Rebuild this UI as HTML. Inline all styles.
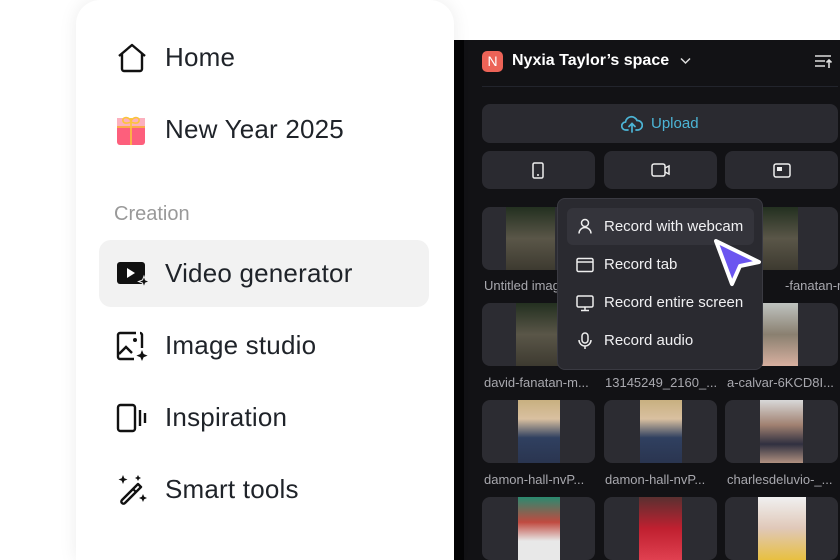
<!DOCTYPE html>
<html><head><meta charset="utf-8"><style>
*{margin:0;padding:0;box-sizing:border-box}
html,body{width:840px;height:560px;overflow:hidden}
body{background:#fff;position:relative;font-family:"Liberation Sans",sans-serif}
.dark{position:absolute;left:454px;top:40px;width:386px;height:520px;background:#121215;border-left:10px solid #050506}
.card{position:absolute;left:76px;top:0;width:378px;height:560px;background:#fff;border-radius:24px 24px 0 0;box-shadow:0 0 18px rgba(0,0,0,.08)}
.nav{position:absolute;left:165px;font-size:26px;color:#1f2329;line-height:28px;letter-spacing:.2px}
.ic{position:absolute;left:116px}
.cre{position:absolute;left:114px;top:203px;font-size:20px;color:#999}
.hl{position:absolute;left:99px;top:240px;width:330px;height:67px;background:#f2f2f2;border-radius:12px}
.t{position:absolute;color:#fff}
.btn{position:absolute;background:#2a2a30;border-radius:8px}
.tile{position:absolute;width:113px;height:63px;background:#2c2c32;border-radius:8px;overflow:hidden}
.tile i{position:absolute;left:24px;top:0;width:49px;height:63px}
.lb{position:absolute;font-size:13px;color:#a8a8ae;white-space:nowrap}
.menu{position:absolute;left:557px;top:198px;width:206px;height:172px;background:#2a2a30;border:1px solid #3a3a42;border-radius:8px}
.mi{position:absolute;left:604px;font-size:15px;color:#f0f0f2}
</style></head><body>
<div class="dark"></div>
<div class="card"></div>
<div class="hl"></div>
<svg class="ic" style="top:42px" width="32" height="32" viewBox="0 0 32 32"><path d="M3 14L16 3l13 11M6 12v15a2 2 0 0 0 2 2h16a2 2 0 0 0 2-2V12" fill="none" stroke="#111" stroke-width="2.4" stroke-linejoin="round"/></svg>
<div class="nav" style="top:43px">Home</div>
<svg class="ic" style="top:114px" width="30" height="32" viewBox="0 0 30 32"><rect x="1" y="4" width="28" height="27" rx="3" fill="#fd5f7c"/><rect x="1" y="4" width="28" height="8" fill="#fcb0be"/><path d="M15 4v27M1 13h28M15 7c-3-5-9-4-8 0s8 1 8 1c0 0 7 3 8-1s-5-5-8 0" fill="none" stroke="#fbc43a" stroke-width="1.6"/></svg>
<div class="nav" style="top:115px">New Year 2025</div>
<div class="cre">Creation</div>
<svg class="ic" style="top:259px" width="34" height="30" viewBox="0 0 34 30"><rect x="1" y="3" width="28" height="22" rx="3" fill="#111"/><path d="M11 9v10l8-5z" fill="#fff"/><path d="M28 17l1.5 4 4 1.5-4 1.5L28 28l-1.5-4-4-1.5 4-1.5z" fill="#111" stroke="#f2f2f2" stroke-width="1"/></svg>
<div class="nav" style="top:259px">Video generator</div>
<svg class="ic" style="top:330px" width="34" height="32" viewBox="0 0 34 32"><path d="M20 3H4a2 2 0 0 0-2 2v22a2 2 0 0 0 2 2h14M26 18V5a2 2 0 0 0-2-2" fill="none" stroke="#111" stroke-width="2.4"/><path d="M3 24l7-7 6 6" fill="none" stroke="#111" stroke-width="2.4"/><circle cx="19" cy="10" r="2" fill="#111"/><path d="M26 20l1.6 4 4 1.6-4 1.6L26 31l-1.6-3.8-4-1.6 4-1.6z" fill="#111"/></svg>
<div class="nav" style="top:331px">Image studio</div>
<svg class="ic" style="top:402px" width="32" height="32" viewBox="0 0 32 32"><rect x="2" y="3" width="17" height="26" rx="2.5" fill="none" stroke="#111" stroke-width="2.4"/><path d="M24 8v16M29 11v10" stroke="#111" stroke-width="2.4"/></svg>
<div class="nav" style="top:403px">Inspiration</div>
<svg class="ic" style="top:474px" width="32" height="32" viewBox="0 0 32 32"><path d="M22 10l3 3L9 29a2 2 0 0 1-3 0 2 2 0 0 1 0-3z" fill="none" stroke="#111" stroke-width="2.4" stroke-linejoin="round"/><path d="M17 15l3 3" stroke="#111" stroke-width="2.2"/><path d="M7 1l1.3 3.2 3.2 1.3-3.2 1.3L7 10 5.7 6.8 2.5 5.5l3.2-1.3zM27 20l1.2 2.8 2.8 1.2-2.8 1.2L27 28l-1.2-2.8-2.8-1.2 2.8-1.2zM22 1l1 2 2 1-2 1-1 2-1-2-2-1 2-1z" fill="#111"/></svg>
<div class="nav" style="top:475px">Smart tools</div>

<div style="position:absolute;left:482px;top:51px;width:21px;height:21px;border-radius:5px;background:#ec6357;color:#fff;font-size:14px;text-align:center;line-height:21px">N</div>
<div class="t" style="left:512px;top:52px;font-size:16px;font-weight:bold">Nyxia Taylor’s space</div>
<svg style="position:absolute;left:680px;top:57px" width="11" height="8" viewBox="0 0 11 8"><path d="M1 1.5l4.5 4.5 4.5-4.5" fill="none" stroke="#ddd" stroke-width="1.5"/></svg>
<svg style="position:absolute;left:815px;top:54px" width="18" height="16" viewBox="0 0 18 16"><path d="M0 2h16M0 7h10M0 12h10M14 14V6M11.5 8.5L14 6l2.5 2.5" fill="none" stroke="#ddd" stroke-width="1.6"/></svg>
<div style="position:absolute;left:482px;top:86px;width:356px;height:1px;background:#22242c"></div>
<div class="btn" style="left:482px;top:104px;width:356px;height:39px"></div>
<svg style="position:absolute;left:621px;top:114px" width="22" height="19" viewBox="0 0 22 19"><path d="M7 16H5a4 4 0 0 1-.5-8A6 6 0 0 1 16 6.5 4.5 4.5 0 0 1 17 16h-2M11 18v-8M8 12.5l3-3 3 3" fill="none" stroke="#4cb5d6" stroke-width="1.7" stroke-linecap="round"/></svg>
<div class="t" style="left:651px;top:115px;font-size:15px;color:#4cb5d6">Upload</div>
<div class="btn" style="left:482px;top:151px;width:113px;height:38px"></div>
<div class="btn" style="left:604px;top:151px;width:113px;height:38px"></div>
<div class="btn" style="left:725px;top:151px;width:113px;height:38px"></div>
<svg style="position:absolute;left:532px;top:162px" width="12" height="17" viewBox="0 0 12 17"><rect x="1" y="1" width="10" height="15" rx="1.5" fill="none" stroke="#eee" stroke-width="1.5"/><circle cx="6" cy="13" r="1" fill="#eee"/></svg>
<svg style="position:absolute;left:651px;top:163px" width="20" height="14" viewBox="0 0 20 14"><rect x="1" y="1" width="13" height="12" rx="2" fill="none" stroke="#eee" stroke-width="1.5"/><path d="M14 5l4-2v8l-4-2" fill="none" stroke="#eee" stroke-width="1.5"/></svg>
<svg style="position:absolute;left:773px;top:163px" width="18" height="15" viewBox="0 0 18 15"><rect x="1" y="1" width="16" height="13" rx="2" fill="none" stroke="#eee" stroke-width="1.5"/><rect x="4" y="4" width="5" height="4" fill="#eee"/></svg>

<div class="tile" style="left:482px;top:207px"><i style="background:linear-gradient(#233020,#5a5648 50%,#3d3a30)"></i></div>
<div class="tile" style="left:725px;top:207px"><i style="background:linear-gradient(#233020,#5a5648 50%,#3d3a30)"></i></div>
<div class="lb" style="left:484px;top:278px">Untitled image</div>
<div class="lb" style="left:785px;top:278px">-fanatan-m...</div>
<div class="tile" style="left:482px;top:303px"><i style="left:34px;background:linear-gradient(#233020,#5a5648 50%,#3d3a30)"></i></div>
<div class="tile" style="left:604px;top:303px"></div>
<div class="tile" style="left:725px;top:303px"><i style="background:linear-gradient(#bfc3c0,#8a8070 50%,#d8b0a0)"></i></div>
<div class="lb" style="left:484px;top:375px">david-fanatan-m...</div>
<div class="lb" style="left:605px;top:375px">13145249_2160_...</div>
<div class="lb" style="left:727px;top:375px">a-calvar-6KCD8I...</div>
<div class="tile" style="left:482px;top:400px"><i style="left:36px;width:42px;background:linear-gradient(#c8b080,#d9c0a0 30%,#304060 60%,#2a3550)"></i></div>
<div class="tile" style="left:604px;top:400px"><i style="left:36px;width:42px;background:linear-gradient(#c8b080,#d9c0a0 30%,#304060 60%,#2a3550)"></i></div>
<div class="tile" style="left:725px;top:400px"><i style="left:35px;width:43px;background:linear-gradient(#d8d8d8,#a08070 40%,#303040 70%,#b09080)"></i></div>
<div class="lb" style="left:484px;top:472px">damon-hall-nvP...</div>
<div class="lb" style="left:605px;top:472px">damon-hall-nvP...</div>
<div class="lb" style="left:727px;top:472px">charlesdeluvio-_...</div>
<div class="tile" style="left:482px;top:497px"><i style="left:36px;width:42px;background:linear-gradient(#2a8a70,#c04a40 40%,#e8e8e8 70%)"></i></div>
<div class="tile" style="left:604px;top:497px"><i style="left:35px;width:43px;background:linear-gradient(#5a3030,#c02030 50%,#e04050)"></i></div>
<div class="tile" style="left:725px;top:497px"><i style="left:33px;width:48px;background:linear-gradient(#f0f0f0,#e0c8b8 50%,#e8c040)"></i></div>

<div class="menu"></div>
<div style="position:absolute;left:567px;top:208px;width:187px;height:37px;background:#34343b;border-radius:6px"></div>
<svg style="position:absolute;left:577px;top:218px" width="16" height="16" viewBox="0 0 16 16"><circle cx="8" cy="5" r="3.5" fill="none" stroke="#eee" stroke-width="1.5"/><path d="M2 15.5a6 6 0 0 1 12 0" fill="none" stroke="#eee" stroke-width="1.5"/></svg>
<div class="mi" style="top:218px">Record with webcam</div>
<svg style="position:absolute;left:576px;top:257px" width="18" height="16" viewBox="0 0 18 16"><rect x="1" y="1.5" width="16" height="13" rx="1.5" fill="none" stroke="#eee" stroke-width="1.5"/><path d="M1 5h16" stroke="#eee" stroke-width="1.5"/></svg>
<div class="mi" style="top:256px">Record tab</div>
<svg style="position:absolute;left:576px;top:295px" width="18" height="17" viewBox="0 0 18 17"><rect x="1" y="1" width="16" height="11" rx="1.5" fill="none" stroke="#eee" stroke-width="1.5"/><path d="M9 12v3M5 15.5h8" stroke="#eee" stroke-width="1.5"/></svg>
<div class="mi" style="top:294px">Record entire screen</div>
<svg style="position:absolute;left:578px;top:332px" width="14" height="18" viewBox="0 0 14 18"><rect x="4" y="1" width="6" height="10" rx="3" fill="none" stroke="#eee" stroke-width="1.5"/><path d="M1 8a6 6 0 0 0 12 0M7 14v3" fill="none" stroke="#eee" stroke-width="1.5"/></svg>
<div class="mi" style="top:332px">Record audio</div>
<svg style="position:absolute;left:708px;top:235px" width="55" height="55" viewBox="0 0 55 55"><path d="M8 6l43 21-19 4-8 18z" fill="#6b55f0" stroke="#fff" stroke-width="4" stroke-linejoin="round"/></svg>
</body></html>
